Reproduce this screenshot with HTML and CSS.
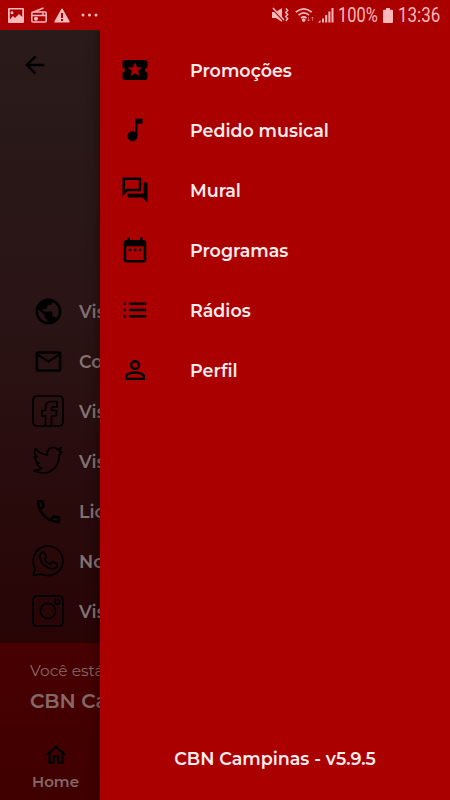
FILE: index.html
```html
<!DOCTYPE html>
<html lang="pt-BR">
<head>
<meta charset="utf-8">
<meta name="viewport" content="width=device-width, initial-scale=1">
<title>CBN Campinas</title>
<link rel="stylesheet" href="styles.css">
</head>
<body>
<div class="app">
  <header class="status">
    <div class="status-left">
      <svg width="16" height="15" viewBox="0 0 16 15"><path fill="currentColor" fill-rule="evenodd" d="M1 0h14q1 0 1 1v13q0 1-1 1H1q-1 0-1-1V1q0-1 1-1zm.8 1.6v9.8L5 8l2 2 4-4 3.3 3V1.600zM4 3.200a1.500 1.500 0 1 1 0 3 1.500 1.500 0 0 1 0-3z"/></svg>
      <svg class="radio" width="16" height="16" viewBox="0 0 16 16" fill="none" stroke="currentColor" stroke-width="1.500"><path d="M2.500 5 12.500 1"/><rect x=".8" y="5" width="14.400" height="10" rx="1.300"/><path d="M1 8.500h14M12 6v2"/><circle cx="5" cy="11.800" r="1.300" fill="currentColor"/></svg>
      <svg class="warn" width="16" height="15" viewBox="0 0 16 15"><path fill="currentColor" fill-rule="evenodd" d="M8 .5Q8.500.5 9 1.500l6.700 12q.3 1-.7 1H1q-1 0-.7-1L7 1.500Q7.500.5 8 .5zM7 5v5h2V5zm0 6v2h2v-2z"/></svg>
      <svg class="more" width="18" height="4" viewBox="0 0 18 4" fill="currentColor"><circle cx="2" cy="2" r="1.500"/><circle cx="8.500" cy="2" r="1.500"/><circle cx="15" cy="2" r="1.500"/></svg>
    </div>
    <div class="status-right">
      <svg width="17" height="16" viewBox="0 0 17 16"><path fill="currentColor" d="M0 5h4l6-4v14l-6-4H0z"/><path d="m0 1 12 13" stroke="#a00" stroke-width="2.200"/><path d="m1 1 11 12M14 1.500l1.700 2-2 2 2 2-2 2 2 2-1.700 2.500" fill="none" stroke="currentColor" stroke-width="1.500"/></svg>
      <svg class="wifi" width="20" height="16" viewBox="0 0 20 16" fill="none" stroke="currentColor" stroke-width="1.700"><path d="M.8 5.200q8-6.800 16 0M3.500 8.200q5.300-4.600 10.600 0M6 11q2.800-2.200 5.500 0"/><circle cx="8.700" cy="13" r="1" fill="currentColor"/><path opacity=".45" stroke-width="1" d="M13.500 10v4m-1.500-1.500 1.500 1.500 1.500-1.500M17.500 14v-4M16 11.500l1.500-1.500 1.500 1.500"/></svg>
      <svg class="signal" width="16" height="16" viewBox="0 0 16 16" fill="currentColor"><path d="M0 15.500 2.500 13v2.500zM4 11.500h2v4H4zM7.200 8h2v7.500h-2zM10.400 4.500h2v11h-2zM13.500 1h2v14.500h-2z"/></svg>
      <span class="percent">100%</span>
      <svg class="battery" width="10" height="15" viewBox="0 0 10 15"><path fill="currentColor" d="M3 0h4v1.800h2q1 0 1 1V14q0 1-1 1H1q-1 0-1-1V2.800q0-1 1-1h2z"/></svg>
      <span class="clock">13:36</span>
    </div>
  </header>

  <main class="page">
    <div class="back"><svg width="26" height="26" viewBox="0 0 24 24"><path d="M20 11H7.830l5.590-5.590L12 4l-8 8 8 8 1.410-1.410L7.830 13H20z" transform="translate(-1.500 -1.200) scale(1.100)"/></svg></div>
    <ul class="contacts">
      <li><span class="ci"><svg width="31" height="31" viewBox="0 0 24 24"><path d="M12 2C6.480 2 2 6.480 2 12s4.480 10 10 10 10-4.480 10-10S17.520 2 12 2zm-1 17.930c-3.950-.49-7-3.850-7-7.930 0-.62.080-1.210.21-1.790L9 15v1c0 1.100.9 2 2 2v1.930zm6.900-2.540c-.26-.81-1-1.390-1.900-1.390h-1v-3c0-.55-.45-1-1-1H8v-2h2c.55 0 1-.45 1-1V7h2c1.100 0 2-.9 2-2v-.41c2.930 1.190 5 4.060 5 7.410 0 2.080-.8 3.970-2.100 5.390z"/></svg></span><span class="cl">Visite nosso site</span></li>
      <li><span class="ci"><svg width="31" height="31" viewBox="0 0 24 24"><path d="M22 6c0-1.100-.9-2-2-2H4c-1.100 0-2 .9-2 2v12c0 1.100.9 2 2 2h16c1.100 0 2-.9 2-2V6zm-2 0-8 5-8-5h16zm0 12H4V8l8 5 8-5v10z"/></svg></span><span class="cl">Contate-nos</span></li>
      <li><span class="ci"><svg class="line" width="32" height="32" viewBox="0 0 32 32"><rect x="1" y="1" width="30" height="30" rx="4"/><path d="M13.500 31V21H10v-5.500h3.500V12.500q0-6 6-6H25v5.300h-3.500q-2 0-2 2v1.700h5.300l-.8 5.500h-4.500v10"/></svg></span><span class="cl">Visite nosso Facebook</span></li>
      <li><span class="ci"><svg class="line" width="32" height="32" viewBox="0 0 32 32"><path d="M30 7q-1.500 2-3 3.200C27.500 20 20.500 28 11 28q-5.500 0-9-2.500 5 0 8-2.700-4-.8-5.300-4.600h2.600Q3 16.500 2.600 11.500q1 .8 2.500.8Q1 8.500 3.500 3.500 8.500 9.500 15.500 10q-.9-5.500 3.500-7.300 3.500-1.200 6.300 1.600 2-.3 3.700-1.500-.5 2.200-2 3.700z"/></svg></span><span class="cl">Visite nosso Twitter</span></li>
      <li><span class="ci"><svg width="31" height="31" viewBox="0 0 24 24"><path d="M6.540 5c.06.89.21 1.760.45 2.590l-1.200 1.200c-.41-1.200-.67-2.470-.76-3.790h1.510m9.860 12.020c.85.24 1.720.39 2.600.45v1.490c-1.320-.09-2.590-.35-3.800-.75l1.200-1.190M7.500 3H4c-.55 0-1 .45-1 1 0 9.390 7.610 17 17 17 .55 0 1-.45 1-1v-3.490c0-.55-.45-1-1-1-1.240 0-2.450-.2-3.570-.57-.1-.04-.21-.05-.31-.05-.26 0-.51.1-.71.290l-2.200 2.200c-2.830-1.450-5.150-3.760-6.590-6.590l2.200-2.200c.28-.28.36-.67.25-1.020C8.700 6.450 8.500 5.250 8.500 4c0-.55-.45-1-1-1z"/></svg></span><span class="cl">Licitações</span></li>
      <li><span class="ci"><svg class="line" width="32" height="32" viewBox="0 0 32 32"><path d="M1.500 30.500 3 23C-1.200 15 2.200 5 11 1.900 21-1.500 31 6 31 16S20.500 33.500 9.500 29.200z"/><path d="M9 8.500q2-2.500 3.500-.7l1.600 3.500q.4 1-1.600 3 2 3.700 5.500 5l1.700-2q.8-.8 1.800-.3l3.300 1.800q1.200.8-.3 3.200-2.800 3.300-7.800 1Q10 20 8 13.500q-.6-3 1-5z"/></svg></span><span class="cl">Nosso WhatsApp</span></li>
      <li><span class="ci"><svg class="line" width="32" height="32" viewBox="0 0 32 32"><rect x="1" y="1" width="30" height="30" rx="4"/><circle cx="16" cy="16" r="7.600"/><circle cx="25.300" cy="6.700" r="2.400"/></svg></span><span class="cl">Visite nosso Instagram</span></li>
    </ul>
  </main>

  <footer class="player">
    <div class="caption">Você está ouvindo</div>
    <div class="station">CBN Campinas</div>
    <div class="tab">
      <svg width="26" height="26" viewBox="0 0 24 24"><path d="m12 5.690 5 4.500V18h-2v-6H9v6H7v-7.810l5-4.500M12 3 2 12h3v8h6v-6h2v6h6v-8h3L12 3z"/></svg>
      <span>Home</span>
    </div>
  </footer>

  <div class="drawer-layer">
    <aside class="drawer">
      <nav>
        <a><svg viewBox="0 0 24 24"><path d="M20 12c0-1.100.9-2 2-2V6c0-1.100-.9-2-2-2H4c-1.100 0-1.990.9-1.990 2v4c1.100 0 1.990.9 1.990 2s-.89 2-2 2v4c0 1.100.9 2 2 2h16c1.100 0 2-.9 2-2v-4c-1.100 0-2-.9-2-2zm-4.420 4.800L12 14.500l-3.580 2.300 1.080-4.120-3.290-2.690 4.240-.25L12 5.800l1.540 3.950 4.240.25-3.290 2.690 1.090 4.110z"/></svg><span>Promoções</span></a>
        <a><svg viewBox="0 0 24 24"><path d="M12 3v10.550c-.59-.34-1.270-.55-2-.55-2.210 0-4 1.790-4 4s1.790 4 4 4 4-1.790 4-4V7h4V3h-6z"/></svg><span>Pedido musical</span></a>
        <a><svg viewBox="0 0 24 24"><path d="M15 4v7H5.170L4 12.170V4h11m1-2H3c-.55 0-1 .45-1 1v14l4-4h10c.55 0 1-.45 1-1V3c0-.55-.45-1-1-1zm5 4h-2v9H6v2c0 .55.450 1 1 1h11l4 4V7c0-.55-.45-1-1-1z"/></svg><span>Mural</span></a>
        <a><svg viewBox="0 0 24 24"><path d="M7 11h2v2H7zm4 0h2v2h-2zm4 0h2v2h-2zM19 4h-1V2h-2v2H8V2H6v2H5c-1.110 0-1.990.9-1.990 2L3 20c0 1.100.89 2 2 2h14c1.100 0 2-.9 2-2V6c0-1.100-.9-2-2-2zm0 16H5V9h14v11z"/></svg><span>Programas</span></a>
        <a><svg viewBox="0 0 24 24"><path d="M1 11h2v2H1zm0 5h2v2H1zM1 6h2v2H1zm5 5h17v2H6zm0 5h17v2H6zM6 6h17v2H6z" transform="translate(2.200 0) scale(.817 1)"/></svg><span>Rádios</span></a>
        <a><svg viewBox="0 0 24 24"><path d="M12 5.900a2.100 2.100 0 1 1 0 4.200 2.100 2.100 0 0 1 0-4.200m0 9c2.970 0 6.100 1.460 6.100 2.100v1.100H5.900V17c0-.64 3.130-2.100 6.100-2.100M12 4C9.790 4 8 5.790 8 8s1.790 4 4 4 4-1.790 4-4-1.790-4-4-4zm0 9c-2.670 0-8 1.340-8 4v3h16v-3c0-2.660-5.330-4-8-4z"/></svg><span>Perfil</span></a>
      </nav>
      <div class="version">CBN Campinas - v5.9.5</div>
    </aside>
  </div>
</div>
</body>
</html>
```
FILE: styles.css
```css
* { box-sizing: border-box; }
body { margin: 0; font-family: Montserrat, Inter, sans-serif; }
svg { display: block; flex: none; }
ul { list-style: none; margin: 0; padding: 0; }

.app {
  position: relative;
  width: 450px;
  height: 800px;
  overflow: hidden;
  display: flex;
  flex-direction: column;
  background: #a00000;
}

.status {
  flex: none;
  height: 30px;
  background: #aa0000;
  color: #ffb9bd;
  display: flex;
  align-items: center;
  justify-content: space-between;
  padding: 0 10px 0 8px;
  font-family: Roboto, sans-serif;
  font-size: 20px;
}
.status-left, .status-right { display: flex; align-items: center; }
.radio { margin-left: 7px; }
.warn { margin-left: 7px; }
.more { margin-left: 11px; }
.wifi { margin-left: 6px; }
.signal { margin-left: 3px; }
.percent, .clock {
  display: block;
  height: 24px;
  line-height: 25px;
  white-space: nowrap;
  transform-origin: 0 50%;
}
.percent { width: 41px; margin-left: 4px; transform: scaleX(0.82); }
.battery { margin-left: 4px; }
.clock { width: 42px; margin-left: 5px; transform: scaleX(0.85); }

.page {
  height: 613px;
  flex: none;
  background: linear-gradient(#291b1a, #2a1415 45%, #280405);
}
.back { height: 256px; padding: 22px 0 0 22px; }
.contacts li { display: flex; align-items: center; height: 50px; padding-left: 30px; }
.ci { width: 36px; display: flex; justify-content: center; }
.line { fill: none; stroke: #000; stroke-width: 1.7; stroke-linejoin: round; }
.cl {
  margin-left: 13px;
  padding-top: 1px;
  color: #807273;
  font-size: 17.5px;
  font-weight: 600;
  white-space: nowrap;
}

.player {
  flex: 1;
  padding: 18px 0 0 30px;
  background: linear-gradient(#480001, #400000);
  color: #856868;
  white-space: nowrap;
}
.caption { font-size: 15.5px; line-height: 20px; }
.station { margin-top: 7px; font-size: 20px; line-height: 26px; font-weight: 600; }
.tab {
  width: 51px;
  margin-top: 28px;
  display: flex;
  flex-direction: column;
  align-items: center;
  font-size: 15px;
  line-height: 20px;
  font-weight: 600;
}
.tab span { margin-top: 4px; }

.drawer-layer {
  position: absolute;
  top: 30px;
  left: 0;
  right: 0;
  bottom: 0;
  overflow: hidden;
  display: flex;
  justify-content: flex-end;
}
.drawer {
  width: 350px;
  background: #aa0000;
  color: #ffecec;
  box-shadow: -2px 0 10px rgba(0, 0, 0, 0.35);
  display: flex;
  flex-direction: column;
  justify-content: space-between;
  padding: 10px 0 30px;
  font-size: 17.5px;
  font-weight: 600;
}
.drawer a { display: flex; align-items: center; height: 60px; padding-left: 20px; }
.drawer a svg { width: 30px; height: 30px; }
.drawer a span { margin-left: 40px; line-height: 24px; padding-top: 1px; }
.version { text-align: center; line-height: 22px; }
```
